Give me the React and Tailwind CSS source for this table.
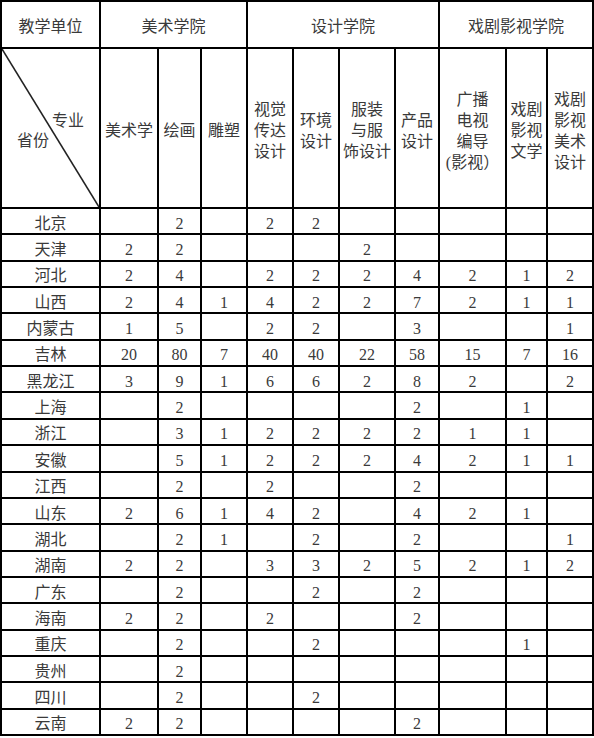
const majors = [
  ['美术学'],
  ['绘画'],
  ['雕塑'],
  ['视觉', '传达', '设计'],
  ['环境', '设计'],
  ['服装', '与服', '饰设计'],
  ['产品', '设计'],
  ['广播', '电视', '编导', '(影视）'],
  ['戏剧', '影视', '文学'],
  ['戏剧', '影视', '美术', '设计'],
]

const rows = [
  ['北京', '', '2', '', '2', '2', '', '', '', '', ''],
  ['天津', '2', '2', '', '', '', '2', '', '', '', ''],
  ['河北', '2', '4', '', '2', '2', '2', '4', '2', '1', '2'],
  ['山西', '2', '4', '1', '4', '2', '2', '7', '2', '1', '1'],
  ['内蒙古', '1', '5', '', '2', '2', '', '3', '', '', '1'],
  ['吉林', '20', '80', '7', '40', '40', '22', '58', '15', '7', '16'],
  ['黑龙江', '3', '9', '1', '6', '6', '2', '8', '2', '', '2'],
  ['上海', '', '2', '', '', '', '', '2', '', '1', ''],
  ['浙江', '', '3', '1', '2', '2', '2', '2', '1', '1', ''],
  ['安徽', '', '5', '1', '2', '2', '2', '4', '2', '1', '1'],
  ['江西', '', '2', '', '2', '', '', '2', '', '', ''],
  ['山东', '2', '6', '1', '4', '2', '', '4', '2', '1', ''],
  ['湖北', '', '2', '1', '', '2', '', '2', '', '', '1'],
  ['湖南', '2', '2', '', '3', '3', '2', '5', '2', '1', '2'],
  ['广东', '', '2', '', '', '2', '', '2', '', '', ''],
  ['海南', '2', '2', '', '2', '', '', '2', '', '', ''],
  ['重庆', '', '2', '', '', '2', '', '', '', '1', ''],
  ['贵州', '', '2', '', '', '', '', '', '', '', ''],
  ['四川', '', '2', '', '', '2', '', '', '', '', ''],
  ['云南', '2', '2', '', '', '', '', '2', '', '', ''],
]

const cell = 'bg-white flex items-center justify-center text-center pt-[5px]'

export default function App() {
  return (
    <div
      className="w-[594px] bg-white text-[#3a3a3a] text-[16px]"
      style={{ fontFamily: "'Liberation Serif', 'Noto Sans CJK SC', serif" }}
    >
      <div className="grid h-[736px] gap-[2px] bg-black p-[2px] grid-cols-[97px_56px_41px_44px_44px_44px_54px_42px_65px_39px_44px] grid-rows-[45px_158px_repeat(20,minmax(0,1fr))]">
        {/* header row 1 */}
        <div className={cell}>教学单位</div>
        <div className={`${cell} col-span-3`}>美术学院</div>
        <div className={`${cell} col-span-4`}>设计学院</div>
        <div className={`${cell} col-span-3`}>戏剧影视学院</div>

        {/* header row 2 */}
        <div className="bg-white relative">
          <svg className="absolute inset-0 w-full h-full" viewBox="0 0 97 158" preserveAspectRatio="none">
            <line x1="0" y1="0" x2="97" y2="158" stroke="#222" strokeWidth="1.6" />
          </svg>
          <span className="absolute left-[50px] top-[60px]">专业</span>
          <span className="absolute left-[15px] top-[80px]">省份</span>
        </div>
        {majors.map((lines, i) => (
          <div key={i} className={`${cell} leading-[21px] whitespace-nowrap`}>
            <div>
              {lines.map((l, j) => (
                <div key={j}>{l}</div>
              ))}
            </div>
          </div>
        ))}

        {/* body */}
        {rows.map((r) =>
          r.map((v, j) => (
            <div key={r[0] + j} className={cell}>
              {v}
            </div>
          ))
        )}
      </div>
    </div>
  )
}
